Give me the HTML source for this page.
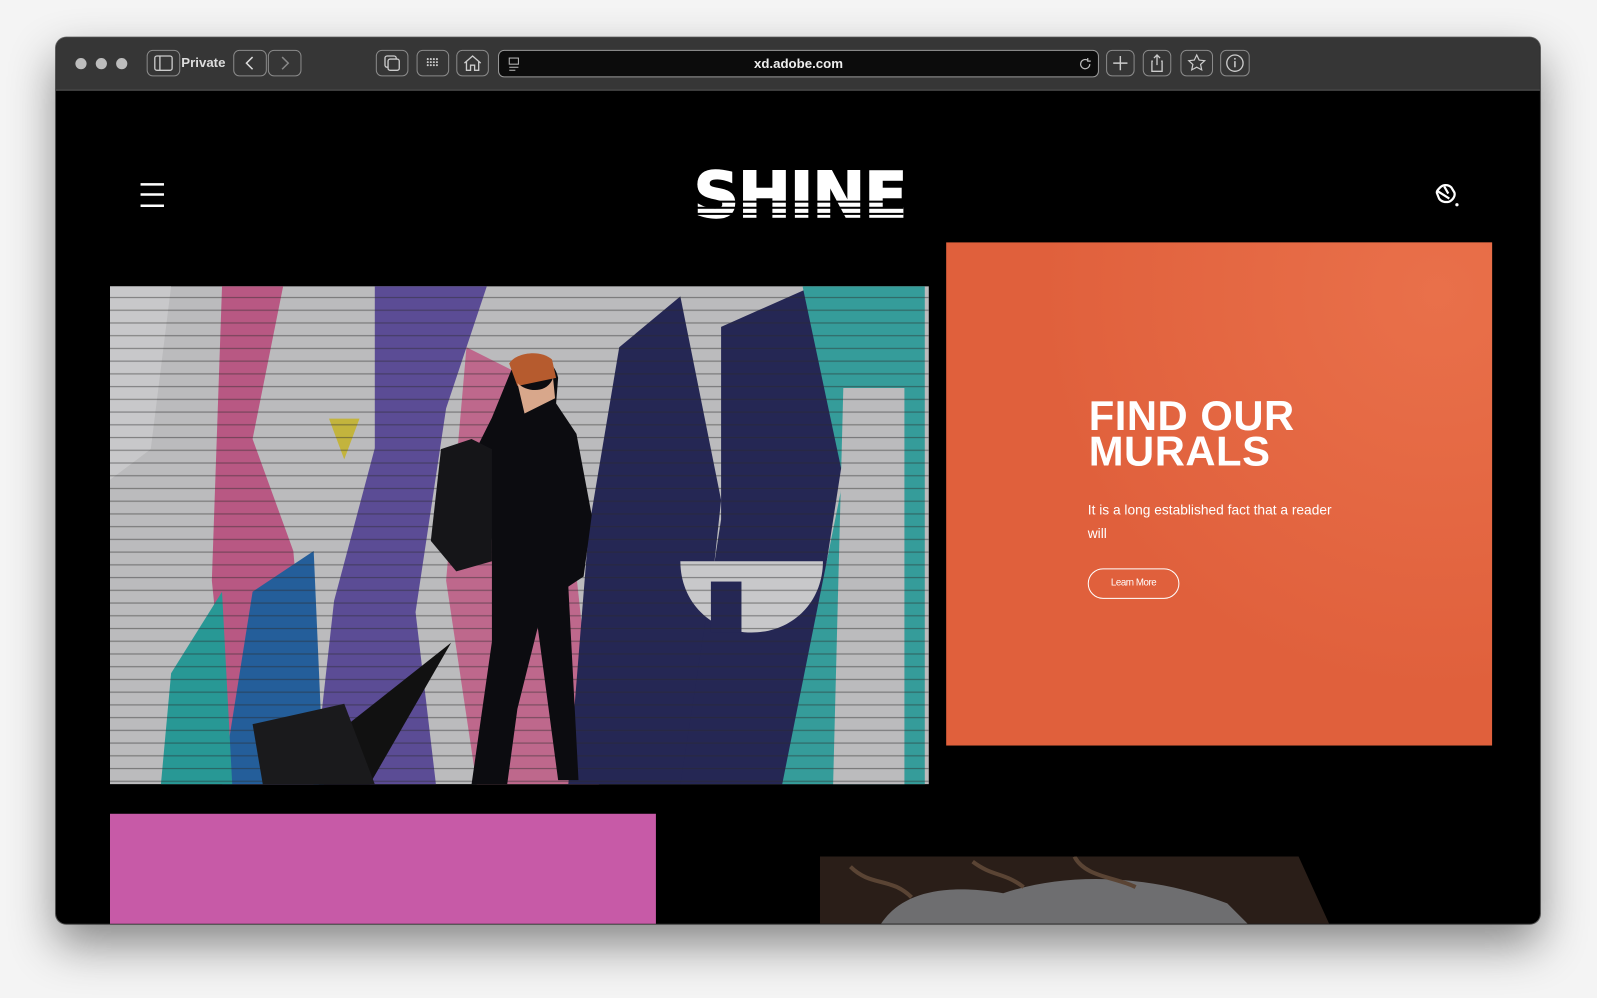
<!DOCTYPE html>
<html><head><meta charset="utf-8">
<style>
html,body{margin:0;padding:0;width:1597px;height:998px;overflow:hidden;background:#f4f4f4;}
#w{position:absolute;left:0;top:0;width:1568px;height:980px;transform:scale(1.01849);transform-origin:0 0;font-family:"Liberation Sans",sans-serif;}
.win{position:absolute;left:55px;top:37px;width:1457px;height:870px;border-radius:10px;overflow:hidden;background:#000;box-shadow:0 20px 45px rgba(0,0,0,.45),0 0 0 1px #666;}
.bar{position:absolute;left:0;top:0;width:100%;height:51px;background:#363636;border-bottom:1px solid #555;}
.dot{position:absolute;top:20px;width:11px;height:11px;border-radius:50%;background:#bdbdbd;}
.btn{position:absolute;top:12px;height:26px;border:1px solid #8a8a8a;border-radius:6px;box-sizing:border-box;}
.url{position:absolute;left:434px;top:12px;width:590px;height:27px;border:1px solid #9a9a9a;border-radius:6px;background:#0c0c0c;box-sizing:border-box;color:#eee;font-size:13px;font-weight:bold;text-align:center;line-height:25px;}
svg{position:absolute;}
.card{position:absolute;left:874px;top:201px;width:536px;height:494px;background:#e0603c;background-image:radial-gradient(circle at 90% 10%,#e9704a,transparent 60%);}
h1{position:absolute;left:140px;top:153px;margin:0;color:#fff;font-size:41px;line-height:35px;font-weight:bold;letter-spacing:.5px;}
.p{position:absolute;left:139px;top:251px;width:245px;color:#fff;font-size:13.5px;line-height:23px;}
.lm{position:absolute;left:139px;top:320px;width:90px;height:30px;border:1.5px solid #fff;border-radius:15px;box-sizing:border-box;color:#fff;font-size:9.5px;text-align:center;line-height:27px;letter-spacing:-.4px;}
</style></head><body><div id="w">
<div class="win">
 <div class="bar">
  <div class="dot" style="left:19px"></div><div class="dot" style="left:39px"></div><div class="dot" style="left:59px"></div>
  <div class="btn" style="left:89px;width:33px"><svg width="31" height="24" viewBox="0 0 31 24"><rect x="7" y="5" width="17" height="14" rx="2" fill="none" stroke="#ccc" stroke-width="1.3"/><line x1="12" y1="5" x2="12" y2="19" stroke="#ccc" stroke-width="1.3"/></svg></div>
  <div style="position:absolute;left:123px;top:17px;color:#ddd;font-size:13px;font-weight:bold">Private</div>
  <div class="btn" style="left:174px;width:33px"><svg width="31" height="24"><path d="M18 6l-6 6 6 6" fill="none" stroke="#ddd" stroke-width="1.5"/></svg></div>
  <div class="btn" style="left:208px;width:33px"><svg width="31" height="24"><path d="M13 6l6 6-6 6" fill="none" stroke="#888" stroke-width="1.5"/></svg></div>
  <div class="btn" style="left:314px;width:32px"><svg width="30" height="24"><rect x="8" y="5" width="11" height="11" rx="2" fill="none" stroke="#ccc" stroke-width="1.3"/><rect x="11" y="8" width="11" height="11" rx="2" fill="#363636" stroke="#ccc" stroke-width="1.3"/></svg></div>
  <div class="btn" style="left:354px;width:32px"><svg width="30" height="24"><g fill="#ccc"><circle cx="10" cy="8" r="1"/><circle cx="13" cy="8" r="1"/><circle cx="16" cy="8" r="1"/><circle cx="19" cy="8" r="1"/><circle cx="10" cy="11" r="1"/><circle cx="13" cy="11" r="1"/><circle cx="16" cy="11" r="1"/><circle cx="19" cy="11" r="1"/><circle cx="10" cy="14" r="1"/><circle cx="13" cy="14" r="1"/><circle cx="16" cy="14" r="1"/><circle cx="19" cy="14" r="1"/></g></svg></div>
  <div class="btn" style="left:393px;width:32px"><svg width="30" height="24"><path d="M7 12l8-7 8 7M9 10v9h4v-5h4v5h4v-9" fill="none" stroke="#ccc" stroke-width="1.3"/></svg></div>
  <div class="url">xd.adobe.com<svg style="left:8px;top:5px" width="14" height="16"><rect x="2" y="2" width="9" height="6" fill="none" stroke="#bbb"/><line x1="2" y1="11" x2="11" y2="11" stroke="#bbb"/><line x1="2" y1="14" x2="8" y2="14" stroke="#bbb"/></svg><svg style="left:568px;top:5px" width="16" height="16"><path d="M12 8a4.5 4.5 0 1 1-2-3.8M10 2v3h3" fill="none" stroke="#bbb" stroke-width="1.2"/></svg></div>
  <div class="btn" style="left:1031px;width:28px"><svg width="26" height="24"><path d="M13 5v14M6 12h14" stroke="#ccc" stroke-width="1.4"/></svg></div>
  <div class="btn" style="left:1067px;width:28px"><svg width="26" height="24"><path d="M9 10H8v10h10V10h-1M13 4v10M10 7l3-3 3 3" fill="none" stroke="#ccc" stroke-width="1.3"/></svg></div>
  <div class="btn" style="left:1104px;width:32px"><svg width="30" height="24"><path d="M15 4l2.4 5 5.4.6-4 3.7 1.1 5.3L15 16l-4.9 2.6 1.1-5.3-4-3.7 5.4-.6z" fill="none" stroke="#ccc" stroke-width="1.2"/></svg></div>
  <div class="btn" style="left:1143px;width:29px"><svg width="27" height="24"><circle cx="13.5" cy="12" r="8" fill="none" stroke="#ccc" stroke-width="1.3"/><path d="M13.5 10v6M13.5 7v1.5" stroke="#ccc" stroke-width="1.5"/></svg></div>
 </div>
 <svg style="left:82px;top:142px" width="26" height="26"><path d="M1 2h23M1 12h23M1 23h23" stroke="#fff" stroke-width="2.4"/></svg>
 <!-- logo -->
 <div style="position:absolute;left:626px;top:124px;width:206px;height:56px;overflow:hidden">
  <div style="white-space:nowrap;color:#fff;font-family:'DejaVu Sans','Liberation Sans',sans-serif;font-weight:bold;font-size:62px;line-height:62px;letter-spacing:-1px;transform:scaleX(1.0);transform-origin:0 0;-webkit-text-stroke:1.5px #fff">SHINE</div>
  <div style="position:absolute;left:0;top:36px;width:100%;height:2px;background:#000"></div>
  <div style="position:absolute;left:0;top:42px;width:100%;height:2px;background:#000"></div>
  <div style="position:absolute;left:0;top:48px;width:100%;height:2px;background:#000"></div>
 </div>
 <svg style="left:1351px;top:141px" width="28" height="28" viewBox="0 0 28 28"><g fill="none" stroke="#fff" stroke-width="2.2"><path d="M8 6c3-3 8-3 11 0l3 5c1 3-1 7-5 9-4 1-8 0-10-3l-2-5c-1-2 1-4 3-6z"/><path d="M6 10l11 7M12 5l4 7"/></g><circle cx="24.5" cy="23" r="1.6" fill="#fff"/></svg>
 <!-- photo -->
 <svg style="left:53px;top:244px" width="804" height="489" viewBox="0 0 804 489">
  <defs><pattern id="st" width="10" height="12.5" patternUnits="userSpaceOnUse"><rect y="10.5" width="10" height="1.2" fill="#333" opacity=".45"/></pattern></defs>
  <rect width="804" height="489" fill="#dcdcde"/>
  <path d="M110 0h60l-30 150 40 110 20 229h-80l-20-200z" fill="#d9689a"/>
  <path d="M260 0h110l-40 120 -30 200 20 169h-120l20-180 40-150z" fill="#6c5ab0"/>
  <path d="M350 60l60 30 40 120 30 279h-120l-30-200z" fill="#e07ba5"/>
  <path d="M500 60l60-50 40 200-30 279h-120l20-250z" fill="#2c2e63"/>
  <path d="M600 40l90-40 40 100-60 389h-110l40-260z" fill="#2c2e63"/>
  <path d="M680 0h120v489h-140l60-300z" fill="#3fb8b5"/>
  <path d="M720 100l60 0 0 389-70 0z" fill="#dcdcde"/>
  <path d="M140 300l60-40 10 229h-100z" fill="#2b6fb5"/>
  <path d="M60 380l50-80 10 189h-70z" fill="#2fb3b0"/>
  <path d="M0 0h60l-20 160 -40 30z" fill="#ececee"/>
  <path d="M560 270c0 40 30 70 70 70s70-30 70-70z" fill="#ececee"/>
  <rect x="590" y="290" width="30" height="50" fill="#2c2e63"/>
  <path d="M215 130l30 0-15 40z" fill="#e6d448"/>
  <rect width="804" height="489" fill="url(#st)"/>
  <rect width="804" height="489" fill="#000" opacity=".15"/>
  <path d="M395 80c10-15 40-15 45 10l-2 25 20 30 15 80 -8 60-15 10 10 190h-20l-20-150-20 80-10 74h-35l20-140 0-100-20-80 20-40z" fill="#0c0c10"/>
  <path d="M392 76c5-10 30-15 42-4l4 18-38 8z" fill="#b65b2e"/>
  <path d="M400 95c10 10 30 10 35-5l2 20-30 15z" fill="#d8a78b"/>
  <path d="M325 160l30-10 20 10 0 110-35 10-25-30z" fill="#151518"/>
  <path d="M335 350l-80 139h-50l30-60z" fill="#111"/>
  <path d="M140 430l90-20 30 79h-110z" fill="#1a1a1c"/>
 </svg>
 <div class="card">
  <h1>FIND OUR<br>MURALS</h1>
  <div class="p">It is a long established fact that a reader will</div>
  <div class="lm">Learn More</div>
 </div>
 <div style="position:absolute;left:53px;top:762px;width:536px;height:110px;background:#c75aa7"></div>
 <svg style="left:750px;top:804px" width="500" height="70"><path d="M0 0h470l30 66h-500z" fill="#2a1e18"/><path d="M60 66c20-30 60-40 120-30 60-20 140-20 220 10l20 20z" fill="#6e6e70"/><path d="M30 10c20 20 40 10 60 30M150 5c20 15 30 10 50 25M250 0c10 20 40 20 60 30" stroke="#5a4434" stroke-width="4" fill="none"/></svg>
</div>
</div></body></html>
